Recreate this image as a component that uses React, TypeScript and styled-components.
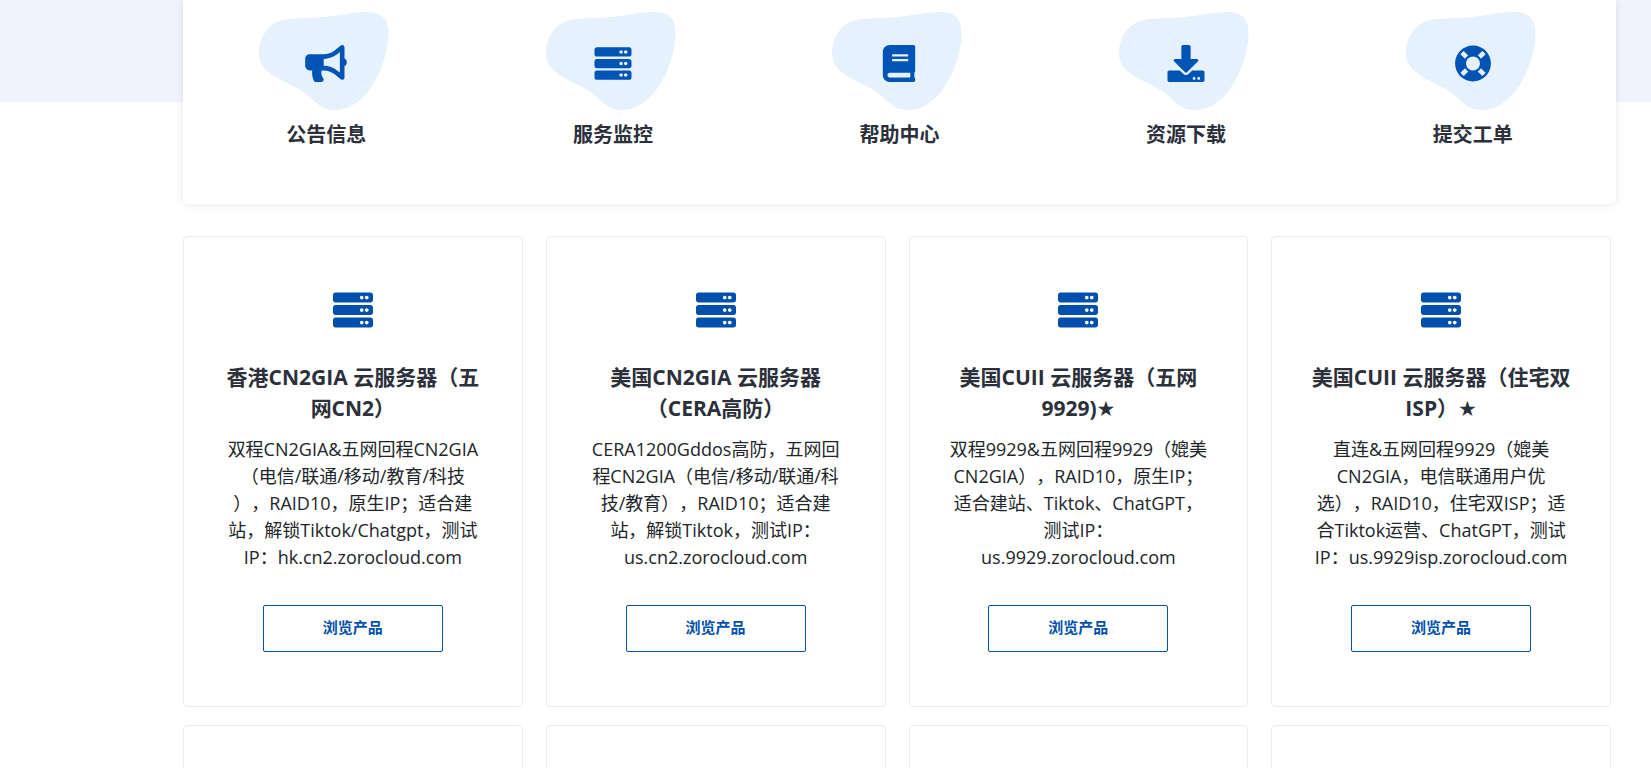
import React from "react";
import styled, { createGlobalStyle } from "styled-components";
import { FaBook, FaBullhorn, FaDownload, FaLifeRing, FaServer } from "react-icons/fa";
import type { IconType } from "react-icons";

const GlobalStyle = createGlobalStyle`
  *, *::before, *::after { box-sizing: border-box; }
  body {
    margin: 0;
    background: #fff;
    color: #212529;
    font-family: "Open Sans", "Noto Sans CJK SC", sans-serif;
    text-spacing-trim: space-all;
  }
`;

const Page = styled.main`
  height: 100vh;
  overflow: hidden;
  padding-left: 183px;
  background: linear-gradient(#f1f3ff, #f1f3ff) no-repeat 0 0 / 100% 102px;
`;

const ServicePanel = styled.nav`
  display: grid;
  grid-template-columns: repeat(5, 1fr);
  margin-right: 35px;
  padding: 12px 0 54px;
  background: #fff;
  border-radius: 0 0 6px 6px;
  box-shadow: 0 0 10px rgba(0, 0, 0, 0.1);
`;

const ServiceLink = styled.a`
  display: flex;
  flex-direction: column;
  align-items: center;
  gap: 6px;
  color: #2b303b;
  font-size: 20px;
  font-weight: 700;
  line-height: 30px;
  text-decoration: none;
`;

const ServiceIcon = styled.span`
  display: grid;
  place-items: center;
  color: #0054b5;

  > * { grid-area: 1 / 1; }
  > svg:last-child { width: 42px; height: 37px; }
`;

const BlobShape = styled.svg`
  width: 134px;
  height: 102px;
  fill: #e5f1fd;
`;

const ProductGrid = styled.section`
  display: grid;
  grid-template-columns: repeat(4, 1fr);
  gap: 18px 23px;
  margin: 32px 40px 0 0;
`;

const Card = styled.article`
  display: flex;
  flex-direction: column;
  align-items: center;
  min-height: 471px;
  padding: 53px 16px;
  background: #fff;
  border: 1px solid #ebebeb;
  border-radius: 4px;
  text-align: center;
`;

const CardIcon = styled(FaServer)`
  width: 40px;
  height: 40px;
  color: #004fad;
`;

const CardTitle = styled.h2`
  margin: 32px 0 12px;
  color: #2b303b;
  font-family: "Open Sans", "DejaVu Sans", "Noto Sans CJK SC", sans-serif;
  font-size: 21px;
  font-weight: 700;
  line-height: 31px;
  white-space: pre-line;
`;

const CardText = styled.p`
  margin: 0 0 34px;
  font-size: 18px;
  line-height: 27px;
  white-space: pre-line;
`;

const BrowseButton = styled.button`
  width: 180px;
  height: 47px;
  padding: 0 0 4px;
  background: #fff;
  border: 1px solid #004fad;
  border-radius: 2px;
  color: #004fad;
  font: 700 15px/22px "Open Sans", "Noto Sans CJK SC", sans-serif;
  cursor: pointer;
`;

const Blob = () => (
  <BlobShape viewBox="0 0 134 102" aria-hidden="true">
    <path d="M0 41C0 27 8 13 21 9C30 6 40 6.5 51 6C80 4.5 92 0 108 0C122 0 129.5 6 129.5 21C129.5 42 120 66 108 81C98 92 88 98 76 98C60 98 55 87 44 79.5C34 73 20 68 11 61C3 55 0 49 0 41Z" />
  </BlobShape>
);

const services: { label: string; icon: IconType }[] = [
  { label: "公告信息", icon: FaBullhorn },
  { label: "服务监控", icon: FaServer },
  { label: "帮助中心", icon: FaBook },
  { label: "资源下载", icon: FaDownload },
  { label: "提交工单", icon: FaLifeRing },
];

const products = [
  {
    title: "香港CN2GIA 云服务器（五\n网CN2）",
    text: "双程CN2GIA&五网回程CN2GIA\n（电信/联通/移动/教育/科技\n），RAID10，原生IP；适合建\n站，解锁Tiktok/Chatgpt，测试\nIP：hk.cn2.zorocloud.com",
  },
  {
    title: "美国CN2GIA 云服务器\n（CERA高防）",
    text: "CERA1200Gddos高防，五网回\n程CN2GIA（电信/移动/联通/科\n技/教育），RAID10；适合建\n站，解锁Tiktok，测试IP：\nus.cn2.zorocloud.com",
  },
  {
    title: "美国CUII 云服务器（五网\n9929)★",
    text: "双程9929&五网回程9929（媲美\nCN2GIA），RAID10，原生IP；\n适合建站、Tiktok、ChatGPT，\n测试IP：\nus.9929.zorocloud.com",
  },
  {
    title: "美国CUII 云服务器（住宅双\nISP）★",
    text: "直连&五网回程9929（媲美\nCN2GIA，电信联通用户优\n选），RAID10，住宅双ISP；适\n合Tiktok运营、ChatGPT，测试\nIP：us.9929isp.zorocloud.com",
  },
];

const nextRow = [1, 2, 3, 4];

export default function App() {
  return (
    <Page lang="zh-CN">
      <GlobalStyle />
      <ServicePanel>
        {services.map(({ label, icon: Icon }) => (
          <ServiceLink href="#" key={label}>
            <ServiceIcon>
              <Blob />
              <Icon />
            </ServiceIcon>
            {label}
          </ServiceLink>
        ))}
      </ServicePanel>
      <ProductGrid>
        {products.map(({ title, text }) => (
          <Card key={title}>
            <CardIcon />
            <CardTitle>{title}</CardTitle>
            <CardText>{text}</CardText>
            <BrowseButton type="button">浏览产品</BrowseButton>
          </Card>
        ))}
        {nextRow.map((n) => (
          <Card key={n} />
        ))}
      </ProductGrid>
    </Page>
  );
}
